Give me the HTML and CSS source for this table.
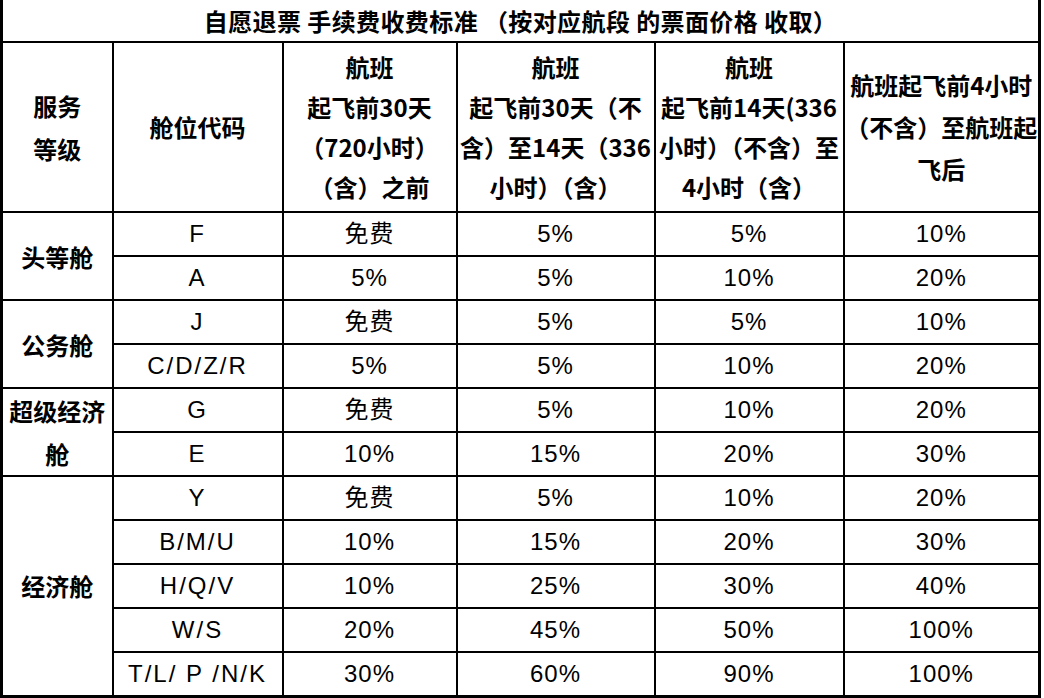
FILE: index.html
```html
<!DOCTYPE html>
<html lang="zh-CN">
<head>
<meta charset="utf-8">
<title>自愿退票 手续费收费标准</title>
<link rel="stylesheet" href="styles.css">
</head>
<body>
<table class="fee-table">
  <colgroup>
    <col class="c-grade">
    <col class="c-code">
    <col class="c-p1">
    <col class="c-p2">
    <col class="c-p3">
    <col class="c-p4">
  </colgroup>
  <tr class="row-title">
    <td colspan="6" class="title">自愿退票 手续费收费标准 （按对应航段 的票面价格 收取）</td>
  </tr>
  <tr class="row-head">
    <th class="label">服务<br>等级</th>
    <th>舱位代码</th>
    <th class="hd">航班<br>起飞前30天<br>（720小时）<br>（含）之前</th>
    <th class="hd">航班<br>起飞前30天（不<br>含）至14天（336<br>小时）（含）</th>
    <th class="hd">航班<br>起飞前14天(336<br>小时）（不含）至<br>4小时（含）</th>
    <th class="hd3">航班起飞前4小时<br>（不含）至航班起<br>飞后</th>
  </tr>
  <tr>
    <th rowspan="2" class="label">头等舱</th>
    <td class="code">F</td><td>免费</td><td>5%</td><td>5%</td><td>10%</td>
  </tr>
  <tr>
    <td class="code">A</td><td>5%</td><td>5%</td><td>10%</td><td>20%</td>
  </tr>
  <tr>
    <th rowspan="2" class="label">公务舱</th>
    <td class="code">J</td><td>免费</td><td>5%</td><td>5%</td><td>10%</td>
  </tr>
  <tr>
    <td class="code">C/D/Z/R</td><td>5%</td><td>5%</td><td>10%</td><td>20%</td>
  </tr>
  <tr>
    <th rowspan="2" class="label">超级经济<br>舱</th>
    <td class="code">G</td><td>免费</td><td>5%</td><td>10%</td><td>20%</td>
  </tr>
  <tr>
    <td class="code">E</td><td>10%</td><td>15%</td><td>20%</td><td>30%</td>
  </tr>
  <tr>
    <th rowspan="5" class="label">经济舱</th>
    <td class="code">Y</td><td>免费</td><td>5%</td><td>10%</td><td>20%</td>
  </tr>
  <tr>
    <td class="code">B/M/U</td><td>10%</td><td>15%</td><td>20%</td><td>30%</td>
  </tr>
  <tr>
    <td class="code">H/Q/V</td><td>10%</td><td>25%</td><td>30%</td><td>40%</td>
  </tr>
  <tr>
    <td class="code">W/S</td><td>20%</td><td>45%</td><td>50%</td><td>100%</td>
  </tr>
  <tr>
    <td class="code">T/L/ P /N/K</td><td>30%</td><td>60%</td><td>90%</td><td>100%</td>
  </tr>
</table>
</body>
</html>
```

FILE: styles.css
```css
html, body {
  margin: 0;
  padding: 0;
  background: #fff;
}

body {
  font-family: "Liberation Sans", "Noto Sans CJK SC", sans-serif;
  font-size: 24px;
  color: #000;
}

.fee-table {
  border-collapse: collapse;
  table-layout: fixed;
  width: 1038px;
  border: 3px solid #000;
  border-top: none;
}

.c-grade { width: 111px; }
.c-code { width: 170px; }
.c-p1 { width: 174px; }
.c-p2 { width: 198px; }
.c-p3 { width: 189px; }
.c-p4 { width: 196px; }

.fee-table td,
.fee-table th {
  border: 2px solid #000;
  padding: 0;
  text-align: center;
  vertical-align: middle;
  white-space: nowrap;
  font-weight: 400;
  line-height: 30px;
}

.fee-table td {
  letter-spacing: 1px;
}

.fee-table td.code {
  letter-spacing: 2px;
}

.fee-table tr {
  height: 44px;
}

.fee-table .row-title {
  height: 42px;
}

.fee-table .row-head {
  height: 170px;
}

.fee-table .title {
  border-top: none;
  font-family: "Noto Sans CJK SC", sans-serif;
  font-weight: 700;
  font-size: 24px;
  letter-spacing: 0.4px;
  line-height: 40px;
}

.fee-table th {
  font-family: "Noto Sans CJK SC", sans-serif;
  font-weight: 700;
}

.fee-table .label {
  line-height: 43px;
}

.fee-table .hd {
  line-height: 40px;
}

.fee-table .hd3 {
  line-height: 42px;
}
```
